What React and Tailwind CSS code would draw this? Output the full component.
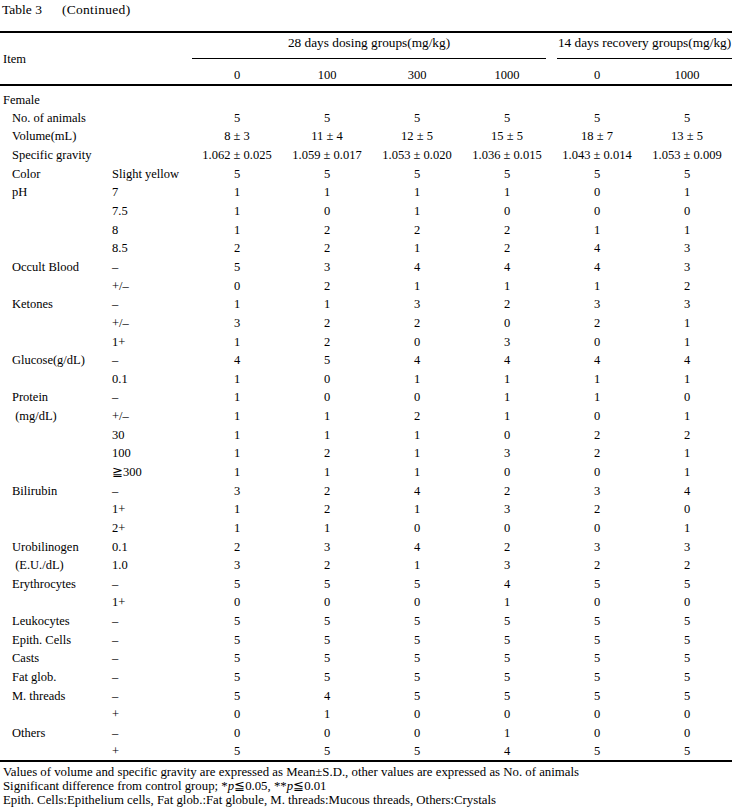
import React from "react";

const rows = [
  ["No. of animals", "", ["5", "5", "5", "5", "5", "5"]],
  ["Volume(mL)", "", ["8 ± 3", "11 ± 4", "12 ± 5", "15 ± 5", "18 ± 7", "13 ± 5"]],
  ["Specific gravity", "", ["1.062 ± 0.025", "1.059 ± 0.017", "1.053 ± 0.020", "1.036 ± 0.015", "1.043 ± 0.014", "1.053 ± 0.009"]],
  ["Color", "Slight yellow", ["5", "5", "5", "5", "5", "5"]],
  ["pH", "7", ["1", "1", "1", "1", "0", "1"]],
  ["", "7.5", ["1", "0", "1", "0", "0", "0"]],
  ["", "8", ["1", "2", "2", "2", "1", "1"]],
  ["", "8.5", ["2", "2", "1", "2", "4", "3"]],
  ["Occult Blood", "–", ["5", "3", "4", "4", "4", "3"]],
  ["", "+/–", ["0", "2", "1", "1", "1", "2"]],
  ["Ketones", "–", ["1", "1", "3", "2", "3", "3"]],
  ["", "+/–", ["3", "2", "2", "0", "2", "1"]],
  ["", "1+", ["1", "2", "0", "3", "0", "1"]],
  ["Glucose(g/dL)", "–", ["4", "5", "4", "4", "4", "4"]],
  ["", "0.1", ["1", "0", "1", "1", "1", "1"]],
  ["Protein", "–", ["1", "0", "0", "1", "1", "0"]],
  [" (mg/dL)", "+/–", ["1", "1", "2", "1", "0", "1"]],
  ["", "30", ["1", "1", "1", "0", "2", "2"]],
  ["", "100", ["1", "2", "1", "3", "2", "1"]],
  ["", "≧300", ["1", "1", "1", "0", "0", "1"]],
  ["Bilirubin", "–", ["3", "2", "4", "2", "3", "4"]],
  ["", "1+", ["1", "2", "1", "3", "2", "0"]],
  ["", "2+", ["1", "1", "0", "0", "0", "1"]],
  ["Urobilinogen", "0.1", ["2", "3", "4", "2", "3", "3"]],
  [" (E.U./dL)", "1.0", ["3", "2", "1", "3", "2", "2"]],
  ["Erythrocytes", "–", ["5", "5", "5", "4", "5", "5"]],
  ["", "1+", ["0", "0", "0", "1", "0", "0"]],
  ["Leukocytes", "–", ["5", "5", "5", "5", "5", "5"]],
  ["Epith. Cells", "–", ["5", "5", "5", "5", "5", "5"]],
  ["Casts", "–", ["5", "5", "5", "5", "5", "5"]],
  ["Fat glob.", "–", ["5", "5", "5", "5", "5", "5"]],
  ["M. threads", "–", ["5", "4", "5", "5", "5", "5"]],
  ["", "+", ["0", "1", "0", "0", "0", "0"]],
  ["Others", "–", ["0", "0", "0", "1", "0", "0"]],
  ["", "+", ["5", "5", "5", "4", "5", "5"]],
];

const doses = ["0", "100", "300", "1000", "0", "1000"];

export default function App() {
  return (
    <div
      className="w-[732px] bg-white text-black"
      style={{ fontFamily: '"Liberation Serif", "DejaVu Serif", serif' }}
    >
      <div className="h-[31px] pt-[3px] pl-[2px] text-[13.5px] leading-[14px]">
        Table 3<span className="ml-[20px] tracking-[0.3px]">(Continued)</span>
      </div>

      <table className="w-[732px] table-fixed border-collapse text-[12.5px]">
        <colgroup>
          <col className="w-[110px]" />
          <col className="w-[82px]" />
          {doses.map((d, i) => (
            <col key={i} className="w-[90px]" />
          ))}
        </colgroup>
        <thead>
          <tr className="h-[26px] border-t-2 border-black">
            <td rowSpan={2} className="pl-[3px] align-middle leading-[14px] border-b-2 border-black" colSpan={2}>
              Item
            </td>
            <td colSpan={4} className="p-0 align-top">
              <div className="mr-[6px] h-[26px] flex flex-col border-b border-black">
                <div className="h-[19px] leading-[19px] text-center text-[13.3px]">28 days dosing groups(mg/kg)</div>
              </div>
            </td>
            <td colSpan={2} className="p-0 align-top">
              <div className="ml-[5px] h-[26px] flex flex-col border-b border-black">
                <div className="h-[19px] leading-[19px] text-center text-[13.3px]">14 days recovery groups(mg/kg)</div>
              </div>
            </td>
          </tr>
          <tr className="h-[26px] border-b-2 border-black">
            {doses.map((d, i) => (
              <td key={i} className="p-0 pt-[9px] align-top text-center leading-[14px]">
                {d}
              </td>
            ))}
          </tr>
        </thead>
        <tbody className="border-b-2 border-black">
          <tr className="h-[23.5px]">
            <td colSpan={8} className="p-0 pl-[3px] pt-[7px] align-top leading-[14px]">
              Female
            </td>
          </tr>
          {rows.map(([label, sub, vals], i) => (
            <tr key={i} className="h-[18.65px]">
              <td className="p-0 pl-[12px] leading-[14px] whitespace-pre overflow-visible">{label}</td>
              <td className="p-0 pl-[2px] leading-[14px] whitespace-nowrap">{sub}</td>
              {vals.map((v, j) => (
                <td key={j} className="p-0 text-center leading-[14px] whitespace-nowrap">
                  {v}
                </td>
              ))}
            </tr>
          ))}
        </tbody>
      </table>

      <div className="pt-[3px] pl-[3px] text-[12.8px] leading-[14px]">
        <p>Values of volume and specific gravity are expressed as Mean±S.D., other values are expressed as No. of animals</p>
        <p>
          Significant difference from control group; *<i>p</i>≦0.05, **<i>p</i>≦0.01
        </p>
        <p>Epith. Cells:Epithelium cells, Fat glob.:Fat globule, M. threads:Mucous threads, Others:Crystals</p>
      </div>
    </div>
  );
}
